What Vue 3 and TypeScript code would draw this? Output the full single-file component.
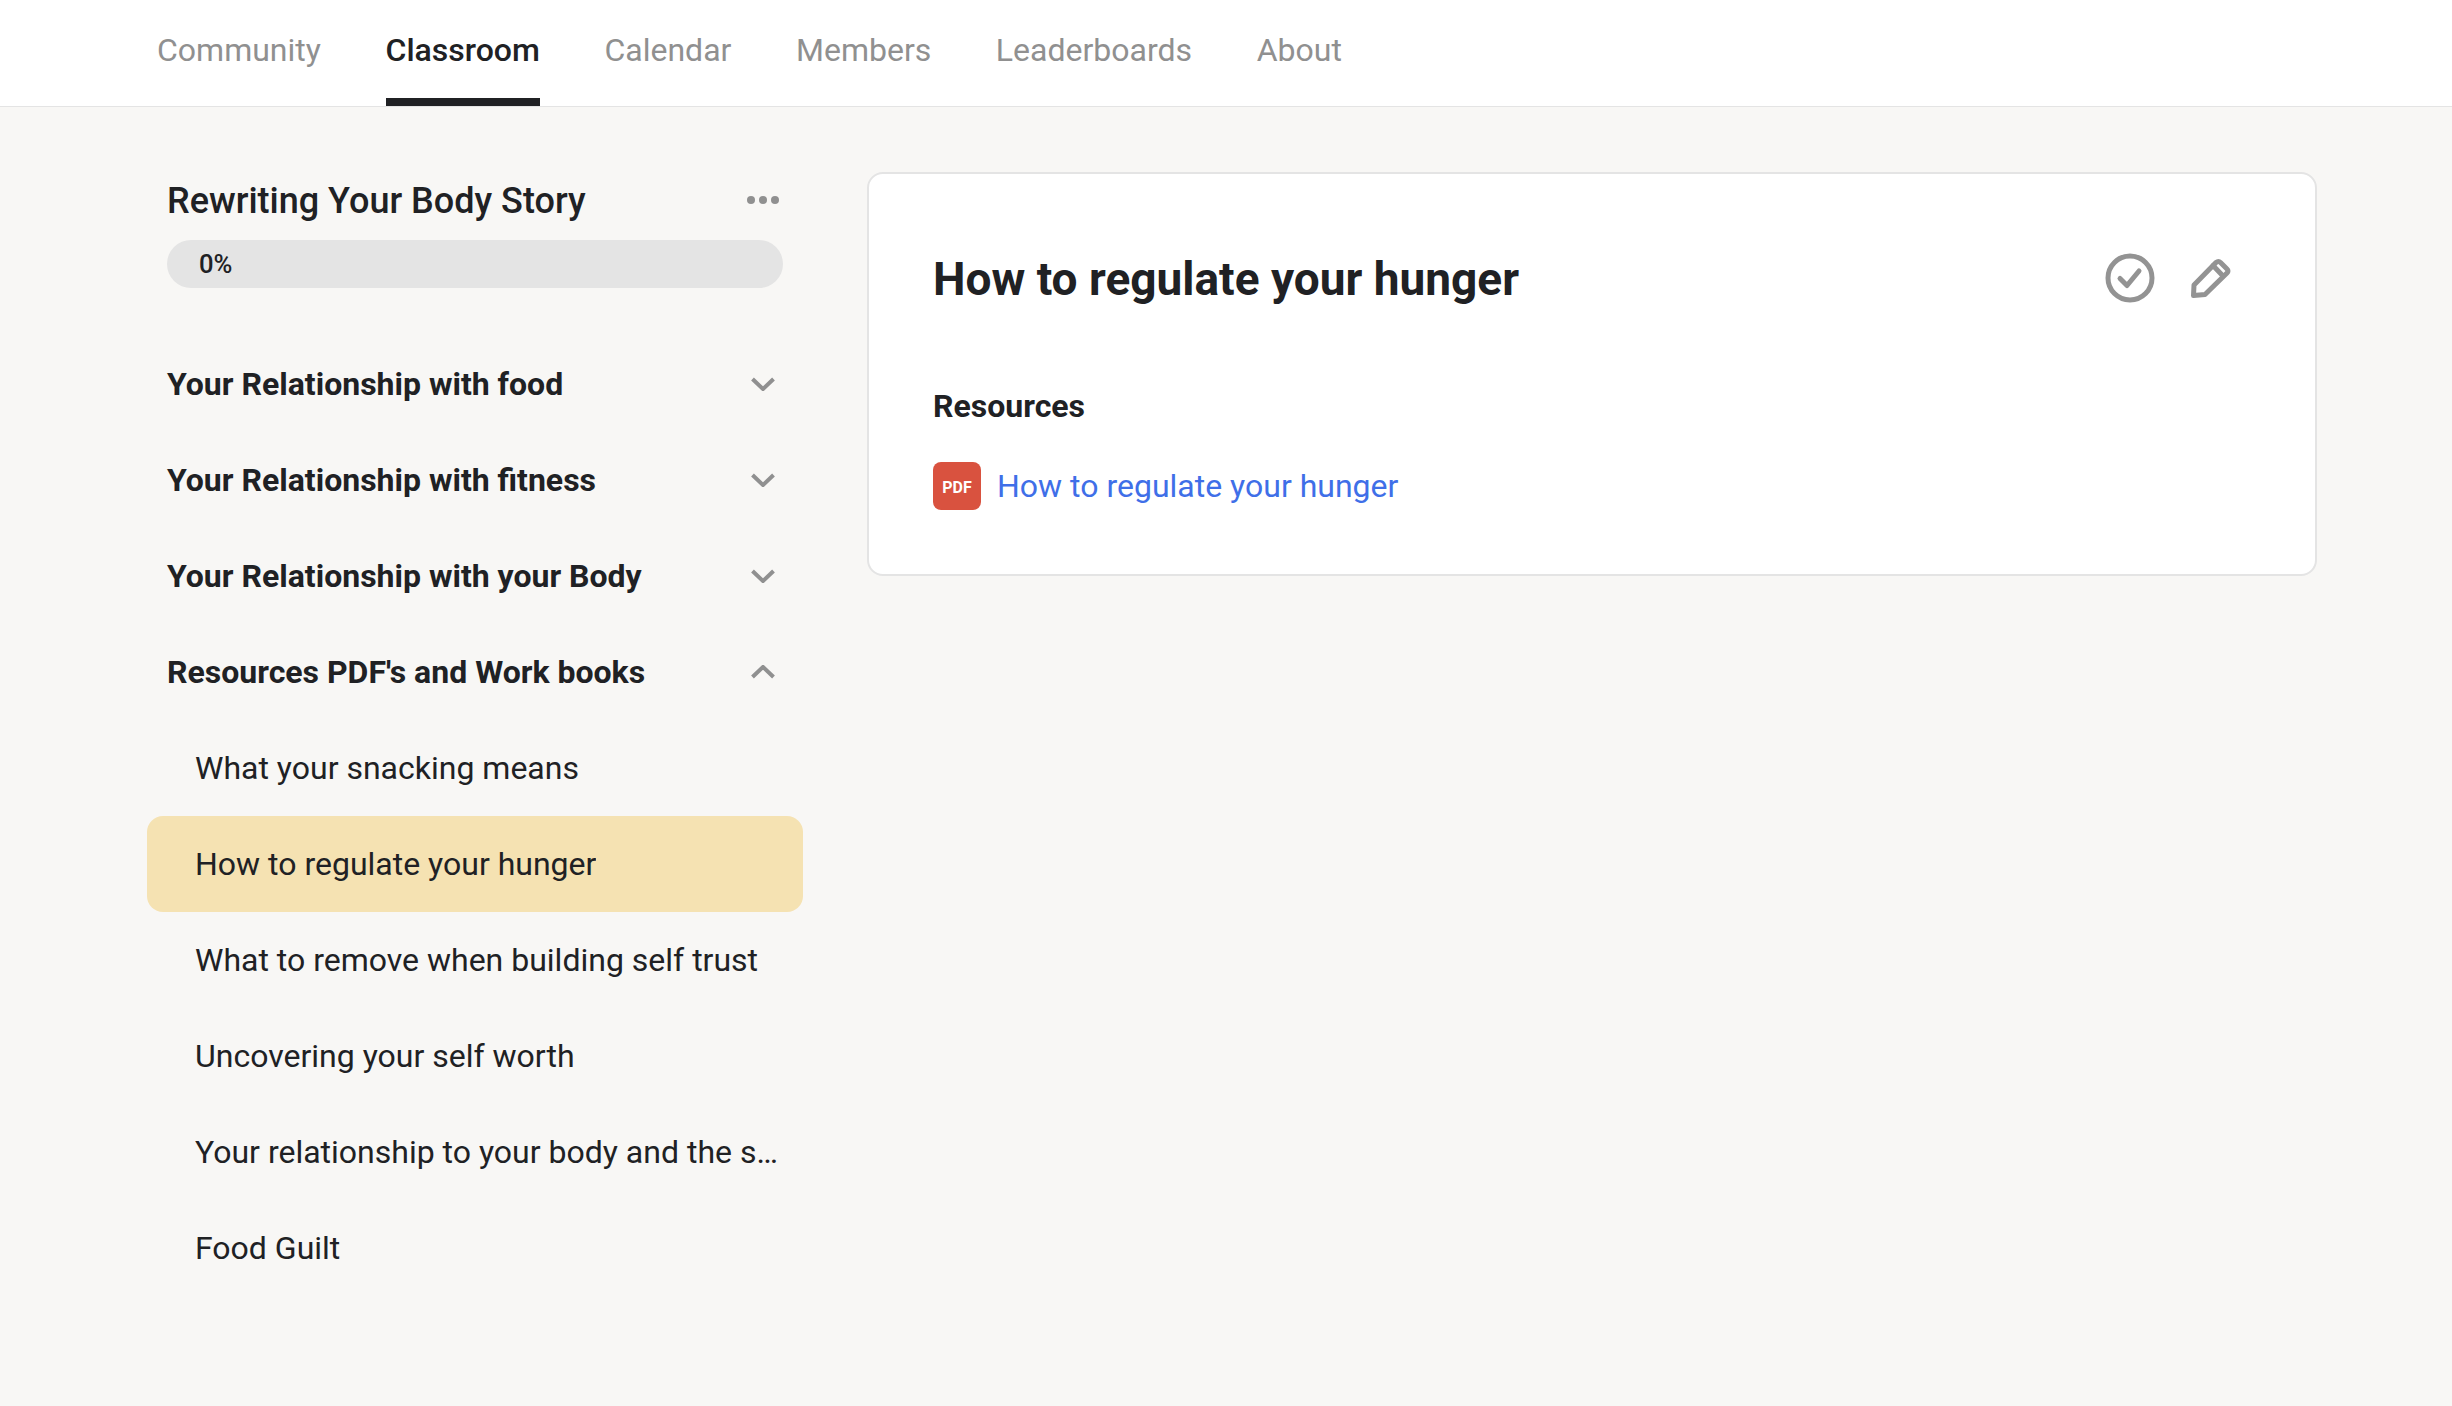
<script setup lang="ts">
const tabs: string[] = ['Community', 'Classroom', 'Calendar', 'Members', 'Leaderboards', 'About']
const sections: { title: string; open: boolean }[] = [
  { title: 'Your Relationship with food', open: false },
  { title: 'Your Relationship with fitness', open: false },
  { title: 'Your Relationship with your Body', open: false },
  { title: "Resources PDF's and Work books", open: true },
]
const lessons: { title: string; active: boolean }[] = [
  { title: 'What your snacking means', active: false },
  { title: 'How to regulate your hunger', active: true },
  { title: 'What to remove when building self trust', active: false },
  { title: 'Uncovering your self worth', active: false },
  { title: 'Your relationship to your body and the stories you tell', active: false },
  { title: 'Food Guilt', active: false },
]
</script>

<template>
  <div class="page">
    <nav class="nav">
      <a v-for="t in tabs" :key="t" class="tab" :class="{ current: t === 'Classroom' }">{{ t }}</a>
    </nav>
    <main class="main">
      <aside class="side">
        <div class="head">
          <h2 class="course">Rewriting Your Body Story</h2>
          <svg class="dots" width="36" height="12" viewBox="0 0 36 12"><circle cx="6" cy="6" r="4" /><circle cx="18" cy="6" r="4" /><circle cx="30" cy="6" r="4" /></svg>
        </div>
        <div class="progress">0%</div>
        <div class="sections">
          <div v-for="s in sections" :key="s.title" class="section">
            <span>{{ s.title }}</span>
            <svg width="24" height="14" viewBox="0 0 24 14" class="chev">
              <path :d="s.open ? 'M1.5 12 L12 2 L22.5 12' : 'M1.5 2 L12 12 L22.5 2'" />
            </svg>
          </div>
          <div v-for="l in lessons" :key="l.title" class="lesson" :class="{ active: l.active }">
            <span class="ltext">{{ l.title }}</span>
          </div>
        </div>
      </aside>
      <section class="card">
        <div class="card-top">
          <h1 class="title">How to regulate your hunger</h1>
          <div class="icons">
            <svg width="50" height="50" viewBox="0 0 50 50" class="ic">
              <circle cx="25" cy="25" r="22" />
              <path d="M15 25.5 L22 32.5 L34 18" />
            </svg>
            <svg width="40" height="40" viewBox="0 0 40 40" class="ic">
              <path d="M2.5 37.5 L3 27 L25 4.5 Q27.5 2.5 29.5 4.5 L36 11 Q38 13 36 15 L14 36.5 Z" />
              <path d="M22 7.5 L32 18" />
            </svg>
          </div>
        </div>
        <h3 class="res">Resources</h3>
        <div class="file">
          <span class="pdf">PDF</span>
          <a class="link">How to regulate your hunger</a>
        </div>
      </section>
    </main>
  </div>
</template>

<style>
html, body { margin: 0; background: #f8f7f5; }
</style>

<style scoped>
.page {
  min-height: 1406px;
  background: #f8f7f5;
  font-family: Roboto, "Liberation Sans", sans-serif;
  color: #202124;
}
.nav {
  display: flex;
  gap: 64.6px;
  height: 106px;
  padding-left: 157px;
  background: #fff;
  border-bottom: 1px solid #e4e4e4;
}
.tab {
  display: flex;
  align-items: center;
  height: 106px;
  box-sizing: border-box;
  font-size: 32px;
  color: #909090;
  padding-top: 2px;
  border-bottom: 8px solid transparent;
}
.tab.current {
  color: #202124;
  font-weight: 500;
  border-bottom-color: #202124;
}
.main {
  display: flex;
  align-items: flex-start;
  padding: 65px 0 0 147px;
}
.side { width: 656px; flex: none; }
.head {
  display: flex;
  align-items: center;
  justify-content: space-between;
  padding: 0 20px;
  height: 58px;
}
.course { margin: 0; font-size: 36px; font-weight: 500; }
.dots { fill: #909090; margin: 0 2px 2px 0; }
.progress {
  margin: 10px 20px 0;
  height: 48px;
  line-height: 48px;
  border-radius: 24px;
  background: #e4e4e4;
  padding-left: 32px;
  font-size: 25.6px;
  font-weight: 500;
}
.sections { margin-top: 48px; }
.section {
  display: flex;
  align-items: center;
  justify-content: space-between;
  height: 96px;
  padding: 0 20px;
  font-size: 32px;
  font-weight: 700;
}
.chev { fill: none; stroke: #909090; stroke-width: 4; margin: 0 8px 1px 0; }
.lesson {
  display: flex;
  align-items: center;
  height: 96px;
  padding: 0 24px 0 48px;
  font-size: 32px;
  border-radius: 16px;
}
.ltext { overflow: hidden; white-space: nowrap; text-overflow: ellipsis; }
.lesson.active { background: #f5e2b2; }
.card {
  box-sizing: border-box;
  width: 1450px;
  height: 404px;
  margin-left: 64px;
  background: #fff;
  border: 2px solid #e4e4e4;
  border-radius: 16px;
  padding: 65px 64px 0;
}
.card-top { display: flex; align-items: center; justify-content: space-between; height: 80px; }
.title { margin: 0; font-size: 46px; font-weight: 700; }
.icons { display: flex; align-items: center; gap: 36px; padding: 0 20px 3px 0; }
.ic { fill: none; stroke: #939393; stroke-width: 5; stroke-linecap: round; stroke-linejoin: round; }
.res { margin: 65px 0 0; font-size: 32px; font-weight: 700; line-height: 44px; }
.file { display: flex; align-items: center; gap: 16px; margin-top: 34px; }
.pdf {
  width: 48px;
  height: 48px;
  border-radius: 8px;
  background: #d9523f;
  color: #fff;
  font-size: 16px;
  font-weight: 700;
  padding-top: 2px;
  box-sizing: border-box;
  display: flex;
  align-items: center;
  justify-content: center;
}
.link { font-size: 32px; color: #3f6fe8; }
</style>
